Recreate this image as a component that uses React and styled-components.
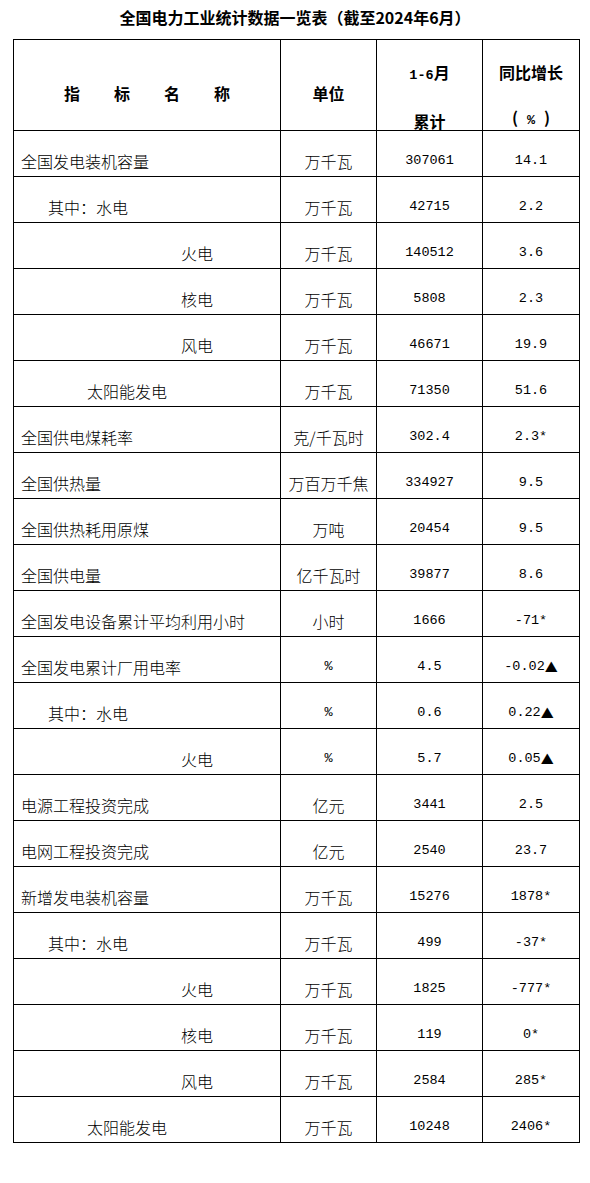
import React from "react";
import styled, { createGlobalStyle } from "styled-components";

const GlobalStyle = createGlobalStyle`
  body {
    margin: 0;
    background: #fff;
    color: #000;
    font-family: "Noto Sans CJK SC", "Noto Sans", sans-serif;
    text-spacing-trim: space-all;
  }
`;

// 每行：名称、缩进级别、单位、累计、同比
const rows = [
  ["全国发电装机容量", 0, "万千瓦", "307061", "14.1"],
  ["其中：水电", 1, "万千瓦", "42715", "2.2"],
  ["火电", 3, "万千瓦", "140512", "3.6"],
  ["核电", 3, "万千瓦", "5808", "2.3"],
  ["风电", 3, "万千瓦", "46671", "19.9"],
  ["太阳能发电", 2, "万千瓦", "71350", "51.6"],
  ["全国供电煤耗率", 0, "克/千瓦时", "302.4", "2.3*"],
  ["全国供热量", 0, "万百万千焦", "334927", "9.5"],
  ["全国供热耗用原煤", 0, "万吨", "20454", "9.5"],
  ["全国供电量", 0, "亿千瓦时", "39877", "8.6"],
  ["全国发电设备累计平均利用小时", 0, "小时", "1666", "-71*"],
  ["全国发电累计厂用电率", 0, "%", "4.5", "-0.02▲"],
  ["其中：水电", 1, "%", "0.6", "0.22▲"],
  ["火电", 3, "%", "5.7", "0.05▲"],
  ["电源工程投资完成", 0, "亿元", "3441", "2.5"],
  ["电网工程投资完成", 0, "亿元", "2540", "23.7"],
  ["新增发电装机容量", 0, "万千瓦", "15276", "1878*"],
  ["其中：水电", 1, "万千瓦", "499", "-37*"],
  ["火电", 3, "万千瓦", "1825", "-777*"],
  ["核电", 3, "万千瓦", "119", "0*"],
  ["风电", 3, "万千瓦", "2584", "285*"],
  ["太阳能发电", 2, "万千瓦", "10248", "2406*"],
];

const indents = [0, 27, 66, 160];

const Page = styled.div`
  width: 590px;
  padding-bottom: 40px;
`;

const Title = styled.h1`
  margin: 0;
  padding: 7px 0 12px;
  font-size: 16px;
  line-height: 20px;
  font-weight: 700;
  text-align: center;
`;

const Table = styled.table`
  margin-left: 13px;
  width: 566px;
  table-layout: fixed;
  border-collapse: collapse;
  border: 1px solid #000;
`;

const Td = styled.td`
  border: 1px solid #000;
  padding: 0;
  vertical-align: top;
`;

const Cell = styled.div`
  height: 45px;
  box-sizing: border-box;
  display: flex;
  align-items: flex-end;
  justify-content: ${(p) => (p.$left ? "flex-start" : "center")};
  padding: 0 0 5px ${(p) => (p.$left ? 7 + p.$indent : 0)}px;
  font-size: 16px;
  line-height: 20px;
  font-weight: 300;
  white-space: nowrap;
`;

const HeadCell = styled.div`
  height: 90px;
  box-sizing: border-box;
  display: flex;
  flex-direction: column;
  align-items: center;
  gap: 25px;
  padding-top: ${(p) => (p.$single ? 43 : 22)}px;
  font-size: 16px;
  line-height: 20px;
  font-weight: 700;
`;

const Spaced = styled.div`
  display: flex;
  gap: 34px;
`;

const Num = styled.span`
  font-family: "Liberation Mono", "DejaVu Sans Mono", monospace;
  font-size: 13.5px;
  font-weight: ${(p) => (p.$bold ? 700 : 400)};
`;

const Paren = styled.span`
  margin: ${(p) => (p.$open ? "0 9px 0 0" : "0 0 0 9px")};
`;

const Tri = styled.span`
  font-family: "Noto Sans CJK SC", sans-serif;
  font-size: 13px;
  font-weight: 400;
`;

const Value = ({ text }) => {
  const tri = text.endsWith("▲");
  return (
    <>
      <Num>{tri ? text.slice(0, -1) : text}</Num>
      {tri && <Tri>▲</Tri>}
    </>
  );
};

const Unit = ({ text }) => (text === "%" ? <Num>%</Num> : text);

export default function App() {
  return (
    <Page>
      <GlobalStyle />
      <Title>全国电力工业统计数据一览表（截至2024年6月）</Title>
      <Table>
        <colgroup>
          <col style={{ width: 267 }} />
          <col style={{ width: 96 }} />
          <col style={{ width: 106 }} />
          <col style={{ width: 97 }} />
        </colgroup>
        <thead>
          <tr>
            <Td>
              <HeadCell $single>
                <Spaced>
                  <span>指</span>
                  <span>标</span>
                  <span>名</span>
                  <span>称</span>
                </Spaced>
              </HeadCell>
            </Td>
            <Td>
              <HeadCell $single>单位</HeadCell>
            </Td>
            <Td>
              <HeadCell>
                <span>
                  <Num $bold>1-6</Num>月
                </span>
                <span>累计</span>
              </HeadCell>
            </Td>
            <Td>
              <HeadCell>
                <span>同比增长</span>
                <span>
                  <Paren $open>(</Paren>
                  <Num $bold>%</Num>
                  <Paren>)</Paren>
                </span>
              </HeadCell>
            </Td>
          </tr>
        </thead>
        <tbody>
          {rows.map(([name, level, unit, total, yoy], i) => (
            <tr key={i}>
              <Td>
                <Cell $left $indent={indents[level]}>
                  {name}
                </Cell>
              </Td>
              <Td>
                <Cell>
                  <Unit text={unit} />
                </Cell>
              </Td>
              <Td>
                <Cell>
                  <Value text={total} />
                </Cell>
              </Td>
              <Td>
                <Cell>
                  <Value text={yoy} />
                </Cell>
              </Td>
            </tr>
          ))}
        </tbody>
      </Table>
    </Page>
  );
}
